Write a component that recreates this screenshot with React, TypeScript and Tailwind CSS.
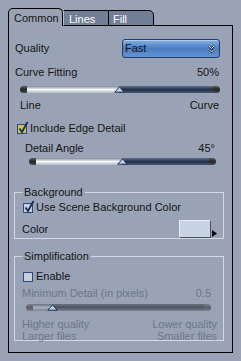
import React from "react";

const font = "font-['Liberation_Sans',Arial,sans-serif]";

function Slider({
  fill,
  disabled,
  className
}: {
  fill: number;
  disabled?: boolean;
  className?: string;
}) {
  const cap = disabled
    ? "bg-gradient-to-b from-[#7b808a] via-[#5a5f68] to-[#7b808a]"
    : "bg-gradient-to-b from-[#5c5c5c] via-[#262626] to-[#4c4c4c]";
  const left = disabled
    ? "bg-gradient-to-b from-[#69717f] via-[#a9b0bc] to-[#7d8594]"
    : "bg-gradient-to-b from-[#7f8898] via-[#f7f9fb] to-[#aeb6c3]";
  const right = disabled
    ? "bg-gradient-to-b from-[#69717f] via-[#4d5562] to-[#7d8594]"
    : "bg-gradient-to-b from-[#66728a] via-[#22304a] to-[#4b5872]";
  return (
    <div className={`relative flex h-[7px] ${className ?? ""}`}>
      <div className={`w-[7px] rounded-l-full ${cap}`} />
      <div className={left} style={{ width: fill }} />
      <div className={`flex-1 ${right}`} />
      <div className={`w-[7px] rounded-r-full ${cap}`} />
      <svg
        className="absolute top-0"
        style={{ left: fill + 7 - 5 }}
        width="11"
        height="7"
        viewBox="0 0 11 7"
      >
        <polygon points="5.5,0.8 10.2,6.2 0.8,6.2" fill="#b9d0ee" stroke="#1d2e4c" strokeWidth="1" />
      </svg>
    </div>
  );
}

function Check({ checked, focus }: { checked?: boolean; focus?: boolean }) {
  return (
    <span className="relative inline-block w-[10px] h-[10px]">
      <span
        className={`absolute inset-0 border border-[#2c4a7c] ${
          focus ? "bg-[#cfc355]" : "bg-[#c4cedd]"
        }`}
      />
      {checked && (
        <svg className="absolute -top-[3px] left-[1px]" width="11" height="13" viewBox="0 0 11 13">
          <polyline points="1.5,7.5 4,11 9.5,1" fill="none" stroke="#1a2c52" strokeWidth="1.8" />
        </svg>
      )}
    </span>
  );
}

export default function App() {
  return (
    <div className={`w-[241px] h-[361px] bg-[#9aa3b5] pt-[8px] pl-[8px] text-[11px] leading-[13px] text-[#141414] ${font}`}>
      {/* Tabs */}
      <div className="relative z-10 flex items-end h-[18px] -mb-[1px]">
        <div className="w-[55px] h-[18px] bg-[#9aa3b5] border border-b-0 border-black rounded-t-[5px] pl-[5px] pt-[3px]">
          Common
        </div>
        <div className="w-[45px] h-[16px] bg-[#727e95] border-t border-b border-black border-l border-l-[#b9c1ce] pl-[5px] pt-[2px] text-white">
          Lines
        </div>
        <div className="w-[46px] h-[16px] bg-[#727e95] border border-black rounded-tr-[5px] pl-[4px] pt-[2px] text-white">
          Fill
        </div>
      </div>

      {/* Panel */}
      <div className="w-[225px] h-[328px] border border-black flex flex-col">
        <div className="mt-[13px] h-[19px] flex items-center justify-between pl-[6px] pr-[12px]">
          <span>Quality</span>
          <div className="w-[98px] h-[19px] rounded-[3px] border border-[#1f3d6c] bg-gradient-to-b from-[#86aee2] via-[#4b7dc2] to-[#6593d3] flex items-center justify-between pl-[2px] pr-[4px] shadow-[inset_0_1px_0_rgba(255,255,255,0.4)]">
            <span className="text-[#0e1420]">Fast</span>
            <svg width="7" height="8" viewBox="0 0 7 8">
              <polyline points="1,1 3.5,3.5 6,1" fill="none" stroke="#1b2a44" strokeWidth="2" />
              <polyline points="1,4.5 3.5,7 6,4.5" fill="none" stroke="#1b2a44" strokeWidth="2" />
              <polyline points="1,1 3.5,3.5 6,1" fill="none" stroke="#f2f5fa" strokeWidth="1" />
              <polyline points="1,4.5 3.5,7 6,4.5" fill="none" stroke="#f2f5fa" strokeWidth="1" />
            </svg>
          </div>
        </div>

        <div className="mt-[8px] flex justify-between pl-[6px] pr-[13px]">
          <span>Curve Fitting</span>
          <span>50%</span>
        </div>
        <Slider fill={92} className="mt-[7px] ml-[11px] w-[200px]" />
        <div className="mt-[6px] flex justify-between pl-[11px] pr-[13px]">
          <span>Line</span>
          <span>Curve</span>
        </div>

        <div className="mt-[10px] flex items-center gap-[3px] pl-[8px]">
          <Check checked focus />
          <span>Include Edge Detail</span>
        </div>
        <div className="mt-[7px] flex justify-between pl-[16px] pr-[17px]">
          <span>Detail Angle</span>
          <span>45°</span>
        </div>
        <Slider fill={86} className="mt-[3px] ml-[20px] w-[187px]" />

        <fieldset className="mt-[21px] ml-[5px] w-[210px] h-[53px] border border-[#d3d9e3]">
          <legend className="ml-[7px] px-[2px]">Background</legend>
          <div className="mt-[2px] flex items-center gap-[3px] pl-[8px]">
            <Check checked />
            <span>Use Scene Background Color</span>
          </div>
          <div className="mt-[6px] flex items-center justify-between pl-[7px] pr-[6px]">
            <span>Color</span>
            <div className="flex items-end">
              <div className="w-[32px] h-[18px] bg-[#c8d3e4] border border-t-[#e8edf4] border-l-[#e8edf4] border-r-[#4d535c] border-b-[#4d535c]" />
              <svg className="ml-[1px] mb-[1px]" width="5" height="7" viewBox="0 0 5 7">
                <polygon points="0,0 5,3.5 0,7" fill="#000" />
              </svg>
            </div>
          </div>
        </fieldset>

        <fieldset className="mt-[11px] ml-[5px] w-[210px] h-[91px] border border-[#d3d9e3]">
          <legend className="ml-[7px] px-[2px]">Simplification</legend>
          <div className="mt-[7px] flex items-center gap-[3px] pl-[8px]">
            <Check />
            <span>Enable</span>
          </div>
          <div className="mt-[4px] flex justify-between pl-[7px] pr-[12px] text-[#6c7688]">
            <span>Minimum Detail (in pixels)</span>
            <span>0.5</span>
          </div>
          <Slider fill={19} disabled className="mt-[4px] ml-[11px] w-[185px]" />
          <div className="mt-[7px] flex justify-between pl-[7px] pr-[6px] leading-[12px] text-[#6c7688]">
            <div className="flex flex-col">
              <span>Higher quality</span>
              <span>Larger files</span>
            </div>
            <div className="flex flex-col items-end">
              <span>Lower quality</span>
              <span>Smaller files</span>
            </div>
          </div>
        </fieldset>
      </div>
    </div>
  );
}
